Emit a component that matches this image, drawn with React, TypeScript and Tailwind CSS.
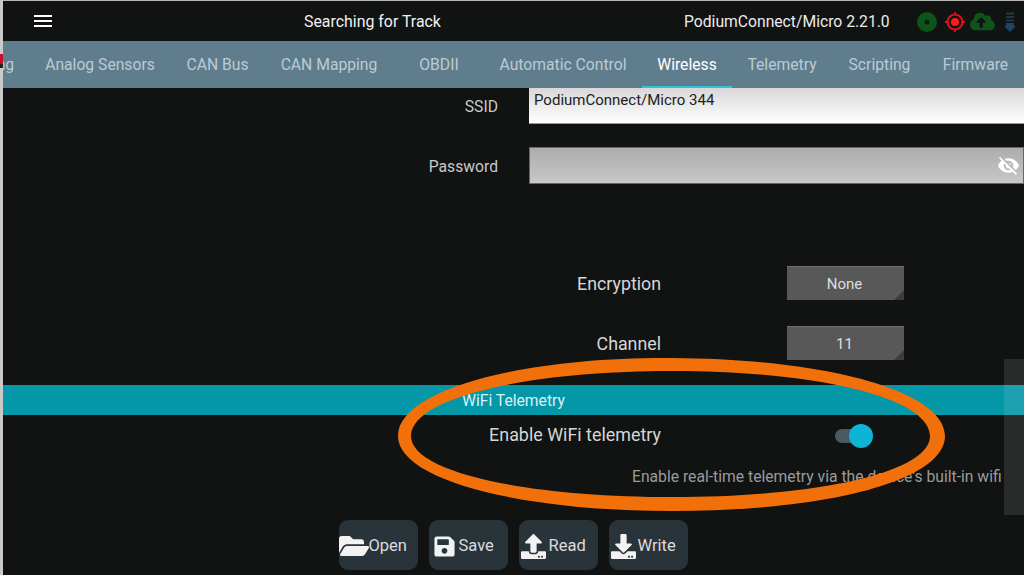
import { FaCloudUploadAlt, FaDownload, FaFolderOpen, FaSave, FaUpload } from "react-icons/fa";
import { MdVisibilityOff } from "react-icons/md";

const tabs = [
  { label: "Logging", width: "w-[86px]" },
  { label: "Analog Sensors", width: "w-[142px]" },
  { label: "CAN Bus", width: "w-[93px]" },
  { label: "CAN Mapping", width: "w-[130px]" },
  { label: "OBDII", width: "w-[90px]" },
  { label: "Automatic Control", width: "w-[158px]" },
  { label: "Wireless", width: "w-[90px]", active: true },
  { label: "Telemetry", width: "w-[100px]" },
  { label: "Scripting", width: "w-[95px]" },
  { label: "Firmware", width: "w-[97px]" },
];

function StatusIcons() {
  return (
    <div className="flex items-center ml-[27px] pt-[1px]">
      <svg width="20" height="20" viewBox="0 0 20 20">
        <circle cx="10" cy="10" r="10" fill="#0e541a" />
        <circle cx="10" cy="10" r="2.5" fill="#0b1f0e" />
      </svg>
      <svg width="22" height="22" viewBox="0 0 24 24" className="ml-[7px]">
        <circle cx="12" cy="12" r="8.2" fill="none" stroke="#d3121c" strokeWidth="2.4" />
        <circle cx="12" cy="12" r="4.4" fill="#ff1a1a" />
        <path d="M12 1v4M12 19v4M1 12h4M19 12h4" stroke="#d3121c" strokeWidth="2" />
      </svg>
      <FaCloudUploadAlt className="text-[#0e541a] text-[25px] ml-[4px]" />
      <svg width="12" height="20" viewBox="0 0 12 20" className="ml-[9px]">
        <path d="M2 1.5h8M2 5h8M2 8.5h8" stroke="#1d3a4c" strokeWidth="2" />
        <path d="M2 11h8v3h2l-6 6-6-6h2z" fill="#1b4560" />
      </svg>
    </div>
  );
}

function FieldRow({ label, className, children }: { label: string; className?: string; children: React.ReactNode }) {
  return (
    <div className={`flex items-center ${className ?? ""}`}>
      <div className="w-[495px] text-right text-[15.7px] text-[#c9c9c9] pt-[2px]">{label}</div>
      <div className="flex-1 ml-[31px] self-stretch">{children}</div>
    </div>
  );
}

function OptionRow({ label, value, className }: { label: string; value: string; className?: string }) {
  return (
    <div className={`flex items-center h-[34px] ${className ?? ""}`}>
      <div className="w-[658px] text-right text-[17.8px] text-[#d6d6d6] pt-[2px]">{label}</div>
      <div className="relative ml-[126px] w-[117px] h-full flex items-center justify-center bg-[#585858] text-[15px] text-[#dedede] border-t border-[#6e6e6e] pt-[1px] pr-[2px]">
        {value}
        <svg width="10" height="10" className="absolute right-0 bottom-0">
          <path d="M10 0V10H0z" fill="#3c3c3c" />
        </svg>
      </div>
    </div>
  );
}

function ActionButton({ icon, label }: { icon: React.ReactNode; label: string }) {
  return (
    <button className="w-[79px] h-[50px] rounded-[9px] bg-[#29333a] flex items-center text-[16.5px] text-[#dcdcdc] whitespace-nowrap pt-[2px]">
      {icon}
      {label}
    </button>
  );
}

export default function App() {
  return (
    <div className="relative w-[1024px] h-[575px] overflow-hidden bg-[#111212] font-['Roboto',sans-serif] flex">
      {/* sliver of the window behind */}
      <div className="w-[3px] shrink-0 bg-[#c9c9c9] flex flex-col">
        <div className="h-[54px]" />
        <div className="h-[10px] bg-[#c01030]" />
        <div className="h-[4px] bg-[#222]" />
      </div>

      <div className="flex-1 min-w-0 flex flex-col relative">
        <div className="h-px bg-[#b9b9b9]" />
        <header className="h-[40px] flex items-center text-white">
          <div className="ml-[31px] flex flex-col gap-[3px] w-[18px]">
            <div className="h-[2px] bg-white" />
            <div className="h-[2px] bg-white" />
            <div className="h-[2px] bg-white" />
          </div>
          <div className="ml-[252px] w-[380px] text-[15.9px] text-[#f0f0f0] pt-[1px]">Searching for Track</div>
          <div className="text-[15.7px] text-[#ececec] pt-[1px]">PodiumConnect/Micro 2.21.0</div>
          <StatusIcons />
        </header>

        <nav className="h-[47px] bg-[#5f7d8d] flex overflow-hidden shrink-0">
          <div className="flex ml-[-60px] shrink-0">
            {tabs.map((tab) => (
              <div
                key={tab.label}
                className={`${tab.width} shrink-0 flex items-center justify-center text-[15.7px] pt-[3px] border-b-2 ${
                  tab.active ? "text-white border-[#2fc3dc]" : "text-[#bccbd3] border-transparent"
                }`}
              >
                {tab.label}
              </div>
            ))}
          </div>
        </nav>

        <main className="flex-1 flex flex-col min-h-0">
          <FieldRow label="SSID" className="h-[36px]">
            <div className="h-full bg-linear-to-b from-[#d8d8d8] to-white text-[15px] text-[#222] pl-[5px] pt-[1px] border-b border-[#999]">
              PodiumConnect/Micro 344
            </div>
          </FieldRow>
          <FieldRow label="Password" className="h-[37px] mt-[23px]">
            <div className="h-full bg-linear-to-b from-[#acacac] to-[#c8c8c8] border border-[#666] flex items-center justify-end pr-[3px]">
              <MdVisibilityOff className="text-white text-[23px]" />
            </div>
          </FieldRow>

          <OptionRow label="Encryption" value="None" className="mt-[82px]" />
          <OptionRow label="Channel" value="11" className="mt-[26px]" />

          <div className="mt-[25px] h-[30px] bg-[#0497a8] flex items-center pl-[459px] pt-[1px] text-[15.7px] text-[#d9f2f5]">
            WiFi Telemetry
          </div>

          <div className="flex items-center h-[41px]">
            <div className="w-[658px] text-right text-[17.9px] text-[#d6d6d6]">Enable WiFi telemetry</div>
            <div className="ml-[174px] w-[38px] h-[24px] flex items-center relative">
              <div className="w-[30px] h-[14px] rounded-full bg-[#4a5a63]" />
              <div className="absolute right-0 w-[24px] h-[24px] rounded-full bg-[#0db4d6]" />
            </div>
          </div>

          <div className="mt-[11px] h-[20px] w-[1001px] overflow-hidden pl-[629px] whitespace-nowrap text-[15.7px] leading-[20px] text-[#9b9b9b]">
            Enable real-time telemetry via the device's built-in wifi
          </div>

          <div className="mt-[33px] flex justify-center gap-[11px] pr-[1px]">
            <ActionButton icon={<FaFolderOpen className="text-[#f2f2f2] text-[30px] shrink-0" />} label="Open" />
            <ActionButton icon={<FaSave className="text-[#f2f2f2] text-[23px] ml-[4px] mr-[3px] shrink-0" />} label="Save" />
            <ActionButton icon={<FaUpload className="text-[#f2f2f2] text-[25px] ml-[2px] mr-[3px] shrink-0" />} label="Read" />
            <ActionButton icon={<FaDownload className="text-[#f2f2f2] text-[25px] ml-[2px] mr-[2px] shrink-0" />} label="Write" />
          </div>
        </main>

        {/* scrollbar overlay */}
        <div className="absolute right-0 top-[359px] w-[20px] h-[156px] bg-white/10" />
      </div>

      {/* hand drawn annotation */}
      <svg className="absolute left-0 top-0 pointer-events-none" width="1024" height="575" viewBox="0 0 1024 575">
        <path
          fillRule="evenodd"
          fill="#f2700a"
          d="M398 436C398 390 520 357 672 358C830 359 945 392 945 436C945 480 830 511 672 511C520 511 398 480 398 436ZM411 436C411 472 525 497 672 497C820 497 930 472 930 436C930 398 820 371 672 371C525 371 411 398 411 436Z"
        />
      </svg>
    </div>
  );
}
